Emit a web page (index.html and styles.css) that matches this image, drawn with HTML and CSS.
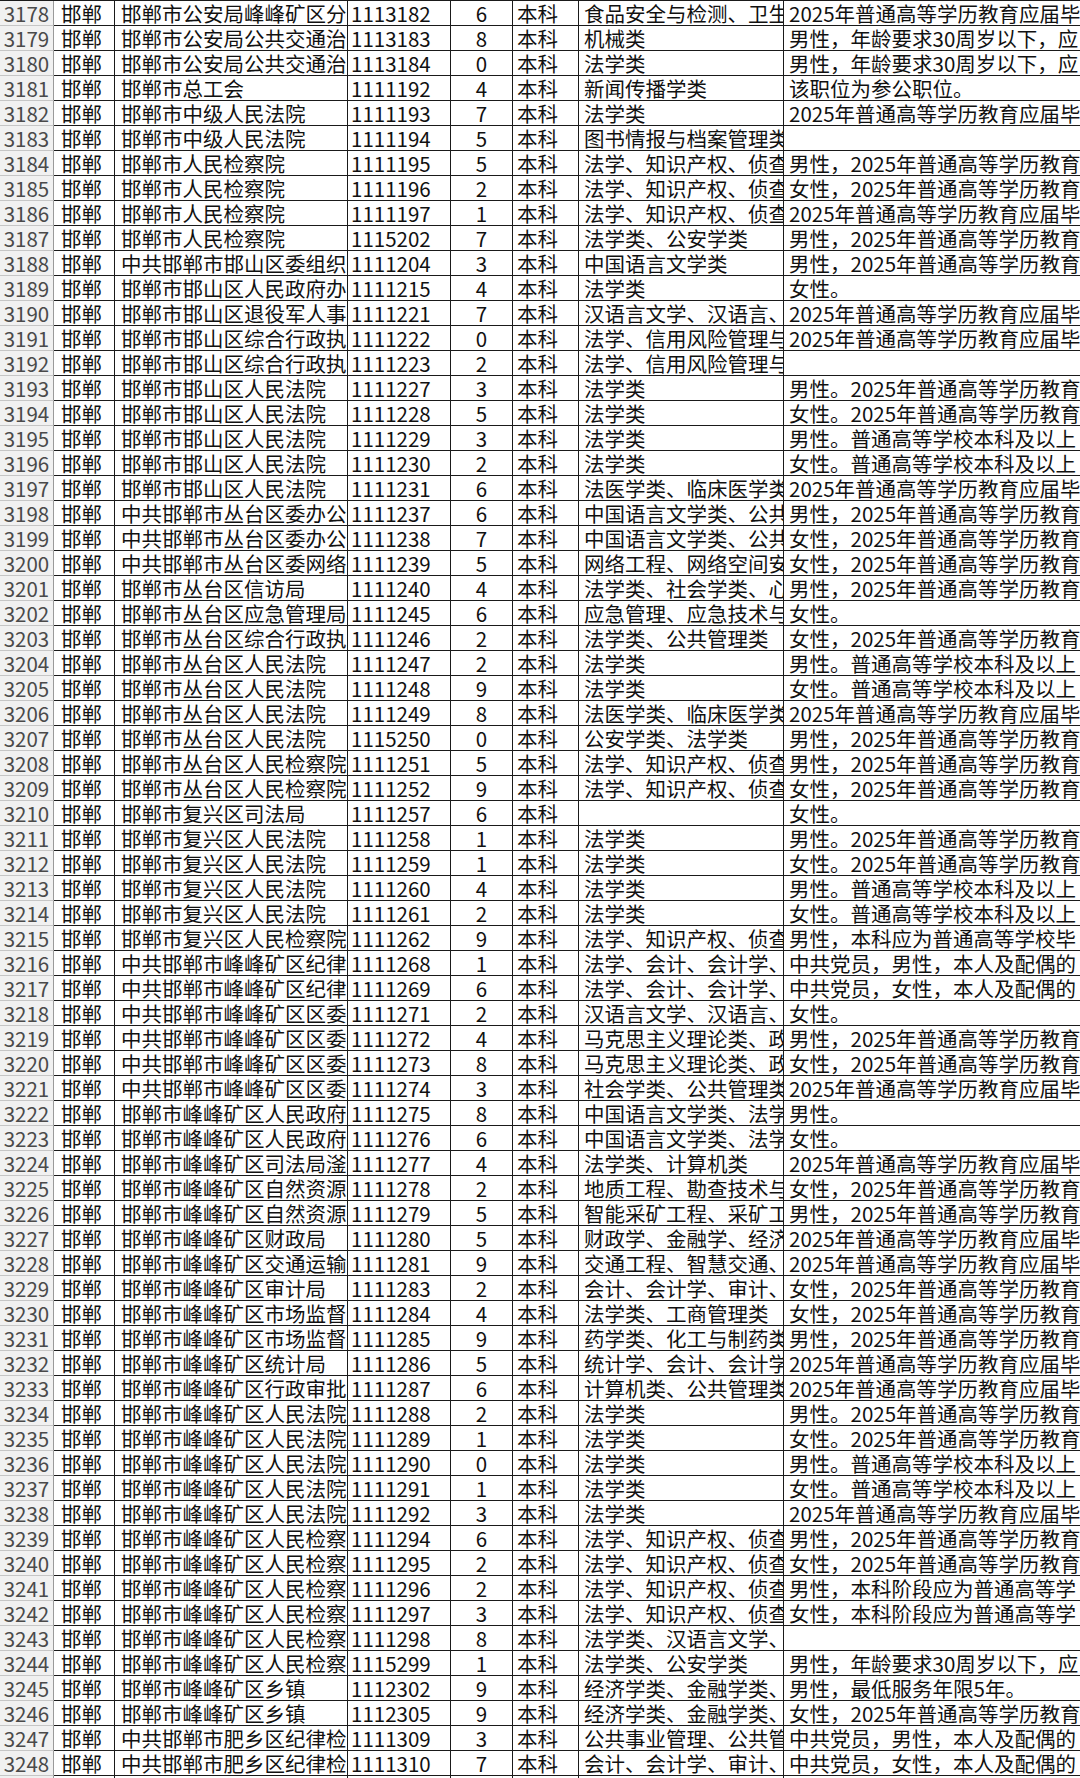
FILE: index.html
```html
<!DOCTYPE html>
<html lang="zh-CN">
<head>
<meta charset="utf-8">
<title>职位表</title>
<link rel="stylesheet" href="styles.css">
</head>
<body>
<div class="sheet">
<div class="row"><div class="c rn">3178</div><div class="c city">邯郸</div><div class="c unit">邯郸市公安局峰峰矿区分</div><div class="c code">1113182</div><div class="c num">6</div><div class="c edu">本科</div><div class="c major">食品安全与检测、卫生</div><div class="c req">2025年普通高等学历教育应届毕</div></div>
<div class="row"><div class="c rn">3179</div><div class="c city">邯郸</div><div class="c unit">邯郸市公安局公共交通治</div><div class="c code">1113183</div><div class="c num">8</div><div class="c edu">本科</div><div class="c major">机械类</div><div class="c req">男性，年龄要求30周岁以下，应</div></div>
<div class="row"><div class="c rn">3180</div><div class="c city">邯郸</div><div class="c unit">邯郸市公安局公共交通治</div><div class="c code">1113184</div><div class="c num">0</div><div class="c edu">本科</div><div class="c major">法学类</div><div class="c req">男性，年龄要求30周岁以下，应</div></div>
<div class="row"><div class="c rn">3181</div><div class="c city">邯郸</div><div class="c unit">邯郸市总工会</div><div class="c code">1111192</div><div class="c num">4</div><div class="c edu">本科</div><div class="c major">新闻传播学类</div><div class="c req">该职位为参公职位。</div></div>
<div class="row"><div class="c rn">3182</div><div class="c city">邯郸</div><div class="c unit">邯郸市中级人民法院</div><div class="c code">1111193</div><div class="c num">7</div><div class="c edu">本科</div><div class="c major">法学类</div><div class="c req">2025年普通高等学历教育应届毕</div></div>
<div class="row"><div class="c rn">3183</div><div class="c city">邯郸</div><div class="c unit">邯郸市中级人民法院</div><div class="c code">1111194</div><div class="c num">5</div><div class="c edu">本科</div><div class="c major">图书情报与档案管理类</div><div class="c req"></div></div>
<div class="row"><div class="c rn">3184</div><div class="c city">邯郸</div><div class="c unit">邯郸市人民检察院</div><div class="c code">1111195</div><div class="c num">5</div><div class="c edu">本科</div><div class="c major">法学、知识产权、侦查</div><div class="c req">男性，2025年普通高等学历教育</div></div>
<div class="row"><div class="c rn">3185</div><div class="c city">邯郸</div><div class="c unit">邯郸市人民检察院</div><div class="c code">1111196</div><div class="c num">2</div><div class="c edu">本科</div><div class="c major">法学、知识产权、侦查</div><div class="c req">女性，2025年普通高等学历教育</div></div>
<div class="row"><div class="c rn">3186</div><div class="c city">邯郸</div><div class="c unit">邯郸市人民检察院</div><div class="c code">1111197</div><div class="c num">1</div><div class="c edu">本科</div><div class="c major">法学、知识产权、侦查</div><div class="c req">2025年普通高等学历教育应届毕</div></div>
<div class="row"><div class="c rn">3187</div><div class="c city">邯郸</div><div class="c unit">邯郸市人民检察院</div><div class="c code">1115202</div><div class="c num">7</div><div class="c edu">本科</div><div class="c major">法学类、公安学类</div><div class="c req">男性，2025年普通高等学历教育</div></div>
<div class="row"><div class="c rn">3188</div><div class="c city">邯郸</div><div class="c unit">中共邯郸市邯山区委组织</div><div class="c code">1111204</div><div class="c num">3</div><div class="c edu">本科</div><div class="c major">中国语言文学类</div><div class="c req">男性，2025年普通高等学历教育</div></div>
<div class="row"><div class="c rn">3189</div><div class="c city">邯郸</div><div class="c unit">邯郸市邯山区人民政府办</div><div class="c code">1111215</div><div class="c num">4</div><div class="c edu">本科</div><div class="c major">法学类</div><div class="c req">女性。</div></div>
<div class="row"><div class="c rn">3190</div><div class="c city">邯郸</div><div class="c unit">邯郸市邯山区退役军人事</div><div class="c code">1111221</div><div class="c num">7</div><div class="c edu">本科</div><div class="c major">汉语言文学、汉语言、</div><div class="c req">2025年普通高等学历教育应届毕</div></div>
<div class="row"><div class="c rn">3191</div><div class="c city">邯郸</div><div class="c unit">邯郸市邯山区综合行政执</div><div class="c code">1111222</div><div class="c num">0</div><div class="c edu">本科</div><div class="c major">法学、信用风险管理与</div><div class="c req">2025年普通高等学历教育应届毕</div></div>
<div class="row"><div class="c rn">3192</div><div class="c city">邯郸</div><div class="c unit">邯郸市邯山区综合行政执</div><div class="c code">1111223</div><div class="c num">2</div><div class="c edu">本科</div><div class="c major">法学、信用风险管理与</div><div class="c req"></div></div>
<div class="row"><div class="c rn">3193</div><div class="c city">邯郸</div><div class="c unit">邯郸市邯山区人民法院</div><div class="c code">1111227</div><div class="c num">3</div><div class="c edu">本科</div><div class="c major">法学类</div><div class="c req">男性。2025年普通高等学历教育</div></div>
<div class="row"><div class="c rn">3194</div><div class="c city">邯郸</div><div class="c unit">邯郸市邯山区人民法院</div><div class="c code">1111228</div><div class="c num">5</div><div class="c edu">本科</div><div class="c major">法学类</div><div class="c req">女性。2025年普通高等学历教育</div></div>
<div class="row"><div class="c rn">3195</div><div class="c city">邯郸</div><div class="c unit">邯郸市邯山区人民法院</div><div class="c code">1111229</div><div class="c num">3</div><div class="c edu">本科</div><div class="c major">法学类</div><div class="c req">男性。普通高等学校本科及以上</div></div>
<div class="row"><div class="c rn">3196</div><div class="c city">邯郸</div><div class="c unit">邯郸市邯山区人民法院</div><div class="c code">1111230</div><div class="c num">2</div><div class="c edu">本科</div><div class="c major">法学类</div><div class="c req">女性。普通高等学校本科及以上</div></div>
<div class="row"><div class="c rn">3197</div><div class="c city">邯郸</div><div class="c unit">邯郸市邯山区人民法院</div><div class="c code">1111231</div><div class="c num">6</div><div class="c edu">本科</div><div class="c major">法医学类、临床医学类</div><div class="c req">2025年普通高等学历教育应届毕</div></div>
<div class="row"><div class="c rn">3198</div><div class="c city">邯郸</div><div class="c unit">中共邯郸市丛台区委办公</div><div class="c code">1111237</div><div class="c num">6</div><div class="c edu">本科</div><div class="c major">中国语言文学类、公共</div><div class="c req">男性，2025年普通高等学历教育</div></div>
<div class="row"><div class="c rn">3199</div><div class="c city">邯郸</div><div class="c unit">中共邯郸市丛台区委办公</div><div class="c code">1111238</div><div class="c num">7</div><div class="c edu">本科</div><div class="c major">中国语言文学类、公共</div><div class="c req">女性，2025年普通高等学历教育</div></div>
<div class="row"><div class="c rn">3200</div><div class="c city">邯郸</div><div class="c unit">中共邯郸市丛台区委网络</div><div class="c code">1111239</div><div class="c num">5</div><div class="c edu">本科</div><div class="c major">网络工程、网络空间安</div><div class="c req">女性，2025年普通高等学历教育</div></div>
<div class="row"><div class="c rn">3201</div><div class="c city">邯郸</div><div class="c unit">邯郸市丛台区信访局</div><div class="c code">1111240</div><div class="c num">4</div><div class="c edu">本科</div><div class="c major">法学类、社会学类、心</div><div class="c req">男性，2025年普通高等学历教育</div></div>
<div class="row"><div class="c rn">3202</div><div class="c city">邯郸</div><div class="c unit">邯郸市丛台区应急管理局</div><div class="c code">1111245</div><div class="c num">6</div><div class="c edu">本科</div><div class="c major">应急管理、应急技术与</div><div class="c req">女性。</div></div>
<div class="row"><div class="c rn">3203</div><div class="c city">邯郸</div><div class="c unit">邯郸市丛台区综合行政执</div><div class="c code">1111246</div><div class="c num">2</div><div class="c edu">本科</div><div class="c major">法学类、公共管理类</div><div class="c req">女性，2025年普通高等学历教育</div></div>
<div class="row"><div class="c rn">3204</div><div class="c city">邯郸</div><div class="c unit">邯郸市丛台区人民法院</div><div class="c code">1111247</div><div class="c num">2</div><div class="c edu">本科</div><div class="c major">法学类</div><div class="c req">男性。普通高等学校本科及以上</div></div>
<div class="row"><div class="c rn">3205</div><div class="c city">邯郸</div><div class="c unit">邯郸市丛台区人民法院</div><div class="c code">1111248</div><div class="c num">9</div><div class="c edu">本科</div><div class="c major">法学类</div><div class="c req">女性。普通高等学校本科及以上</div></div>
<div class="row"><div class="c rn">3206</div><div class="c city">邯郸</div><div class="c unit">邯郸市丛台区人民法院</div><div class="c code">1111249</div><div class="c num">8</div><div class="c edu">本科</div><div class="c major">法医学类、临床医学类</div><div class="c req">2025年普通高等学历教育应届毕</div></div>
<div class="row"><div class="c rn">3207</div><div class="c city">邯郸</div><div class="c unit">邯郸市丛台区人民法院</div><div class="c code">1115250</div><div class="c num">0</div><div class="c edu">本科</div><div class="c major">公安学类、法学类</div><div class="c req">男性，2025年普通高等学历教育</div></div>
<div class="row"><div class="c rn">3208</div><div class="c city">邯郸</div><div class="c unit">邯郸市丛台区人民检察院</div><div class="c code">1111251</div><div class="c num">5</div><div class="c edu">本科</div><div class="c major">法学、知识产权、侦查</div><div class="c req">男性，2025年普通高等学历教育</div></div>
<div class="row"><div class="c rn">3209</div><div class="c city">邯郸</div><div class="c unit">邯郸市丛台区人民检察院</div><div class="c code">1111252</div><div class="c num">9</div><div class="c edu">本科</div><div class="c major">法学、知识产权、侦查</div><div class="c req">女性，2025年普通高等学历教育</div></div>
<div class="row"><div class="c rn">3210</div><div class="c city">邯郸</div><div class="c unit">邯郸市复兴区司法局</div><div class="c code">1111257</div><div class="c num">6</div><div class="c edu">本科</div><div class="c major"></div><div class="c req">女性。</div></div>
<div class="row"><div class="c rn">3211</div><div class="c city">邯郸</div><div class="c unit">邯郸市复兴区人民法院</div><div class="c code">1111258</div><div class="c num">1</div><div class="c edu">本科</div><div class="c major">法学类</div><div class="c req">男性。2025年普通高等学历教育</div></div>
<div class="row"><div class="c rn">3212</div><div class="c city">邯郸</div><div class="c unit">邯郸市复兴区人民法院</div><div class="c code">1111259</div><div class="c num">1</div><div class="c edu">本科</div><div class="c major">法学类</div><div class="c req">女性。2025年普通高等学历教育</div></div>
<div class="row"><div class="c rn">3213</div><div class="c city">邯郸</div><div class="c unit">邯郸市复兴区人民法院</div><div class="c code">1111260</div><div class="c num">4</div><div class="c edu">本科</div><div class="c major">法学类</div><div class="c req">男性。普通高等学校本科及以上</div></div>
<div class="row"><div class="c rn">3214</div><div class="c city">邯郸</div><div class="c unit">邯郸市复兴区人民法院</div><div class="c code">1111261</div><div class="c num">2</div><div class="c edu">本科</div><div class="c major">法学类</div><div class="c req">女性。普通高等学校本科及以上</div></div>
<div class="row"><div class="c rn">3215</div><div class="c city">邯郸</div><div class="c unit">邯郸市复兴区人民检察院</div><div class="c code">1111262</div><div class="c num">9</div><div class="c edu">本科</div><div class="c major">法学、知识产权、侦查</div><div class="c req">男性，本科应为普通高等学校毕</div></div>
<div class="row"><div class="c rn">3216</div><div class="c city">邯郸</div><div class="c unit">中共邯郸市峰峰矿区纪律</div><div class="c code">1111268</div><div class="c num">1</div><div class="c edu">本科</div><div class="c major">法学、会计、会计学、</div><div class="c req">中共党员，男性，本人及配偶的</div></div>
<div class="row"><div class="c rn">3217</div><div class="c city">邯郸</div><div class="c unit">中共邯郸市峰峰矿区纪律</div><div class="c code">1111269</div><div class="c num">6</div><div class="c edu">本科</div><div class="c major">法学、会计、会计学、</div><div class="c req">中共党员，女性，本人及配偶的</div></div>
<div class="row"><div class="c rn">3218</div><div class="c city">邯郸</div><div class="c unit">中共邯郸市峰峰矿区区委</div><div class="c code">1111271</div><div class="c num">2</div><div class="c edu">本科</div><div class="c major">汉语言文学、汉语言、</div><div class="c req">女性。</div></div>
<div class="row"><div class="c rn">3219</div><div class="c city">邯郸</div><div class="c unit">中共邯郸市峰峰矿区区委</div><div class="c code">1111272</div><div class="c num">4</div><div class="c edu">本科</div><div class="c major">马克思主义理论类、政</div><div class="c req">男性，2025年普通高等学历教育</div></div>
<div class="row"><div class="c rn">3220</div><div class="c city">邯郸</div><div class="c unit">中共邯郸市峰峰矿区区委</div><div class="c code">1111273</div><div class="c num">8</div><div class="c edu">本科</div><div class="c major">马克思主义理论类、政</div><div class="c req">女性，2025年普通高等学历教育</div></div>
<div class="row"><div class="c rn">3221</div><div class="c city">邯郸</div><div class="c unit">中共邯郸市峰峰矿区区委</div><div class="c code">1111274</div><div class="c num">3</div><div class="c edu">本科</div><div class="c major">社会学类、公共管理类</div><div class="c req">2025年普通高等学历教育应届毕</div></div>
<div class="row"><div class="c rn">3222</div><div class="c city">邯郸</div><div class="c unit">邯郸市峰峰矿区人民政府</div><div class="c code">1111275</div><div class="c num">8</div><div class="c edu">本科</div><div class="c major">中国语言文学类、法学</div><div class="c req">男性。</div></div>
<div class="row"><div class="c rn">3223</div><div class="c city">邯郸</div><div class="c unit">邯郸市峰峰矿区人民政府</div><div class="c code">1111276</div><div class="c num">6</div><div class="c edu">本科</div><div class="c major">中国语言文学类、法学</div><div class="c req">女性。</div></div>
<div class="row"><div class="c rn">3224</div><div class="c city">邯郸</div><div class="c unit">邯郸市峰峰矿区司法局滏</div><div class="c code">1111277</div><div class="c num">4</div><div class="c edu">本科</div><div class="c major">法学类、计算机类</div><div class="c req">2025年普通高等学历教育应届毕</div></div>
<div class="row"><div class="c rn">3225</div><div class="c city">邯郸</div><div class="c unit">邯郸市峰峰矿区自然资源</div><div class="c code">1111278</div><div class="c num">2</div><div class="c edu">本科</div><div class="c major">地质工程、勘查技术与</div><div class="c req">女性，2025年普通高等学历教育</div></div>
<div class="row"><div class="c rn">3226</div><div class="c city">邯郸</div><div class="c unit">邯郸市峰峰矿区自然资源</div><div class="c code">1111279</div><div class="c num">5</div><div class="c edu">本科</div><div class="c major">智能采矿工程、采矿工</div><div class="c req">男性，2025年普通高等学历教育</div></div>
<div class="row"><div class="c rn">3227</div><div class="c city">邯郸</div><div class="c unit">邯郸市峰峰矿区财政局</div><div class="c code">1111280</div><div class="c num">5</div><div class="c edu">本科</div><div class="c major">财政学、金融学、经济</div><div class="c req">2025年普通高等学历教育应届毕</div></div>
<div class="row"><div class="c rn">3228</div><div class="c city">邯郸</div><div class="c unit">邯郸市峰峰矿区交通运输</div><div class="c code">1111281</div><div class="c num">9</div><div class="c edu">本科</div><div class="c major">交通工程、智慧交通、</div><div class="c req">2025年普通高等学历教育应届毕</div></div>
<div class="row"><div class="c rn">3229</div><div class="c city">邯郸</div><div class="c unit">邯郸市峰峰矿区审计局</div><div class="c code">1111283</div><div class="c num">2</div><div class="c edu">本科</div><div class="c major">会计、会计学、审计、</div><div class="c req">女性，2025年普通高等学历教育</div></div>
<div class="row"><div class="c rn">3230</div><div class="c city">邯郸</div><div class="c unit">邯郸市峰峰矿区市场监督</div><div class="c code">1111284</div><div class="c num">4</div><div class="c edu">本科</div><div class="c major">法学类、工商管理类</div><div class="c req">女性，2025年普通高等学历教育</div></div>
<div class="row"><div class="c rn">3231</div><div class="c city">邯郸</div><div class="c unit">邯郸市峰峰矿区市场监督</div><div class="c code">1111285</div><div class="c num">9</div><div class="c edu">本科</div><div class="c major">药学类、化工与制药类</div><div class="c req">男性，2025年普通高等学历教育</div></div>
<div class="row"><div class="c rn">3232</div><div class="c city">邯郸</div><div class="c unit">邯郸市峰峰矿区统计局</div><div class="c code">1111286</div><div class="c num">5</div><div class="c edu">本科</div><div class="c major">统计学、会计、会计学</div><div class="c req">2025年普通高等学历教育应届毕</div></div>
<div class="row"><div class="c rn">3233</div><div class="c city">邯郸</div><div class="c unit">邯郸市峰峰矿区行政审批</div><div class="c code">1111287</div><div class="c num">6</div><div class="c edu">本科</div><div class="c major">计算机类、公共管理类</div><div class="c req">2025年普通高等学历教育应届毕</div></div>
<div class="row"><div class="c rn">3234</div><div class="c city">邯郸</div><div class="c unit">邯郸市峰峰矿区人民法院</div><div class="c code">1111288</div><div class="c num">2</div><div class="c edu">本科</div><div class="c major">法学类</div><div class="c req">男性。2025年普通高等学历教育</div></div>
<div class="row"><div class="c rn">3235</div><div class="c city">邯郸</div><div class="c unit">邯郸市峰峰矿区人民法院</div><div class="c code">1111289</div><div class="c num">1</div><div class="c edu">本科</div><div class="c major">法学类</div><div class="c req">女性。2025年普通高等学历教育</div></div>
<div class="row"><div class="c rn">3236</div><div class="c city">邯郸</div><div class="c unit">邯郸市峰峰矿区人民法院</div><div class="c code">1111290</div><div class="c num">0</div><div class="c edu">本科</div><div class="c major">法学类</div><div class="c req">男性。普通高等学校本科及以上</div></div>
<div class="row"><div class="c rn">3237</div><div class="c city">邯郸</div><div class="c unit">邯郸市峰峰矿区人民法院</div><div class="c code">1111291</div><div class="c num">1</div><div class="c edu">本科</div><div class="c major">法学类</div><div class="c req">女性。普通高等学校本科及以上</div></div>
<div class="row"><div class="c rn">3238</div><div class="c city">邯郸</div><div class="c unit">邯郸市峰峰矿区人民法院</div><div class="c code">1111292</div><div class="c num">3</div><div class="c edu">本科</div><div class="c major">法学类</div><div class="c req">2025年普通高等学历教育应届毕</div></div>
<div class="row"><div class="c rn">3239</div><div class="c city">邯郸</div><div class="c unit">邯郸市峰峰矿区人民检察</div><div class="c code">1111294</div><div class="c num">6</div><div class="c edu">本科</div><div class="c major">法学、知识产权、侦查</div><div class="c req">男性，2025年普通高等学历教育</div></div>
<div class="row"><div class="c rn">3240</div><div class="c city">邯郸</div><div class="c unit">邯郸市峰峰矿区人民检察</div><div class="c code">1111295</div><div class="c num">2</div><div class="c edu">本科</div><div class="c major">法学、知识产权、侦查</div><div class="c req">女性，2025年普通高等学历教育</div></div>
<div class="row"><div class="c rn">3241</div><div class="c city">邯郸</div><div class="c unit">邯郸市峰峰矿区人民检察</div><div class="c code">1111296</div><div class="c num">2</div><div class="c edu">本科</div><div class="c major">法学、知识产权、侦查</div><div class="c req">男性，本科阶段应为普通高等学</div></div>
<div class="row"><div class="c rn">3242</div><div class="c city">邯郸</div><div class="c unit">邯郸市峰峰矿区人民检察</div><div class="c code">1111297</div><div class="c num">3</div><div class="c edu">本科</div><div class="c major">法学、知识产权、侦查</div><div class="c req">女性，本科阶段应为普通高等学</div></div>
<div class="row"><div class="c rn">3243</div><div class="c city">邯郸</div><div class="c unit">邯郸市峰峰矿区人民检察</div><div class="c code">1111298</div><div class="c num">8</div><div class="c edu">本科</div><div class="c major">法学类、汉语言文学、</div><div class="c req"></div></div>
<div class="row"><div class="c rn">3244</div><div class="c city">邯郸</div><div class="c unit">邯郸市峰峰矿区人民检察</div><div class="c code">1115299</div><div class="c num">1</div><div class="c edu">本科</div><div class="c major">法学类、公安学类</div><div class="c req">男性，年龄要求30周岁以下，应</div></div>
<div class="row"><div class="c rn">3245</div><div class="c city">邯郸</div><div class="c unit">邯郸市峰峰矿区乡镇</div><div class="c code">1112302</div><div class="c num">9</div><div class="c edu">本科</div><div class="c major">经济学类、金融学类、</div><div class="c req">男性，最低服务年限5年。</div></div>
<div class="row"><div class="c rn">3246</div><div class="c city">邯郸</div><div class="c unit">邯郸市峰峰矿区乡镇</div><div class="c code">1112305</div><div class="c num">9</div><div class="c edu">本科</div><div class="c major">经济学类、金融学类、</div><div class="c req">女性，2025年普通高等学历教育</div></div>
<div class="row"><div class="c rn">3247</div><div class="c city">邯郸</div><div class="c unit">中共邯郸市肥乡区纪律检</div><div class="c code">1111309</div><div class="c num">3</div><div class="c edu">本科</div><div class="c major">公共事业管理、公共管</div><div class="c req">中共党员，男性，本人及配偶的</div></div>
<div class="row"><div class="c rn">3248</div><div class="c city">邯郸</div><div class="c unit">中共邯郸市肥乡区纪律检</div><div class="c code">1111310</div><div class="c num">7</div><div class="c edu">本科</div><div class="c major">会计、会计学、审计、</div><div class="c req">中共党员，女性，本人及配偶的</div></div>
<div class="row"><div class="c rn"></div><div class="c city"></div><div class="c unit"></div><div class="c code"></div><div class="c num"></div><div class="c edu"></div><div class="c major"></div><div class="c req"></div></div>
</div>
</body>
</html>
```

FILE: styles.css
```css
html, body {
  margin: 0;
  padding: 0;
  overflow: hidden;
  background: #ffffff;
}

body {
  width: 1080px;
  height: 1778px;
  font-family: "Noto Sans CJK SC", "Noto Sans", sans-serif;
  font-size: 20.5px;
  color: #111111;
}

.sheet {
  width: 1080px;
  overflow: hidden;
  border-top: 1px solid #1a1a1a;
}

.row {
  display: grid;
  grid-template-columns: 54px 61px 233px 103px 62px 66px 205px 296px;
  height: 25px;
}

.c {
  box-sizing: border-box;
  height: 25px;
  line-height: 24px;
  border-right: 1px solid #1a1a1a;
  border-bottom: 1px solid #1a1a1a;
  white-space: nowrap;
}

.unit,
.major,
.req {
  overflow: hidden;
  text-overflow: clip;
}

.rn {
  background: #f1f1f1;
  color: #4a4a4a;
  text-align: center;
  border-bottom-color: #c6c6c6;
  border-right-color: #9a9a9a;
}

.city { padding-left: 7px; }
.unit { padding-left: 6px; }
.code { padding-left: 3px; }
.num { text-align: center; }
.edu { padding-left: 4px; }
.major { padding-left: 5px; }
.req { padding-left: 5px; border-right: none; }
```
